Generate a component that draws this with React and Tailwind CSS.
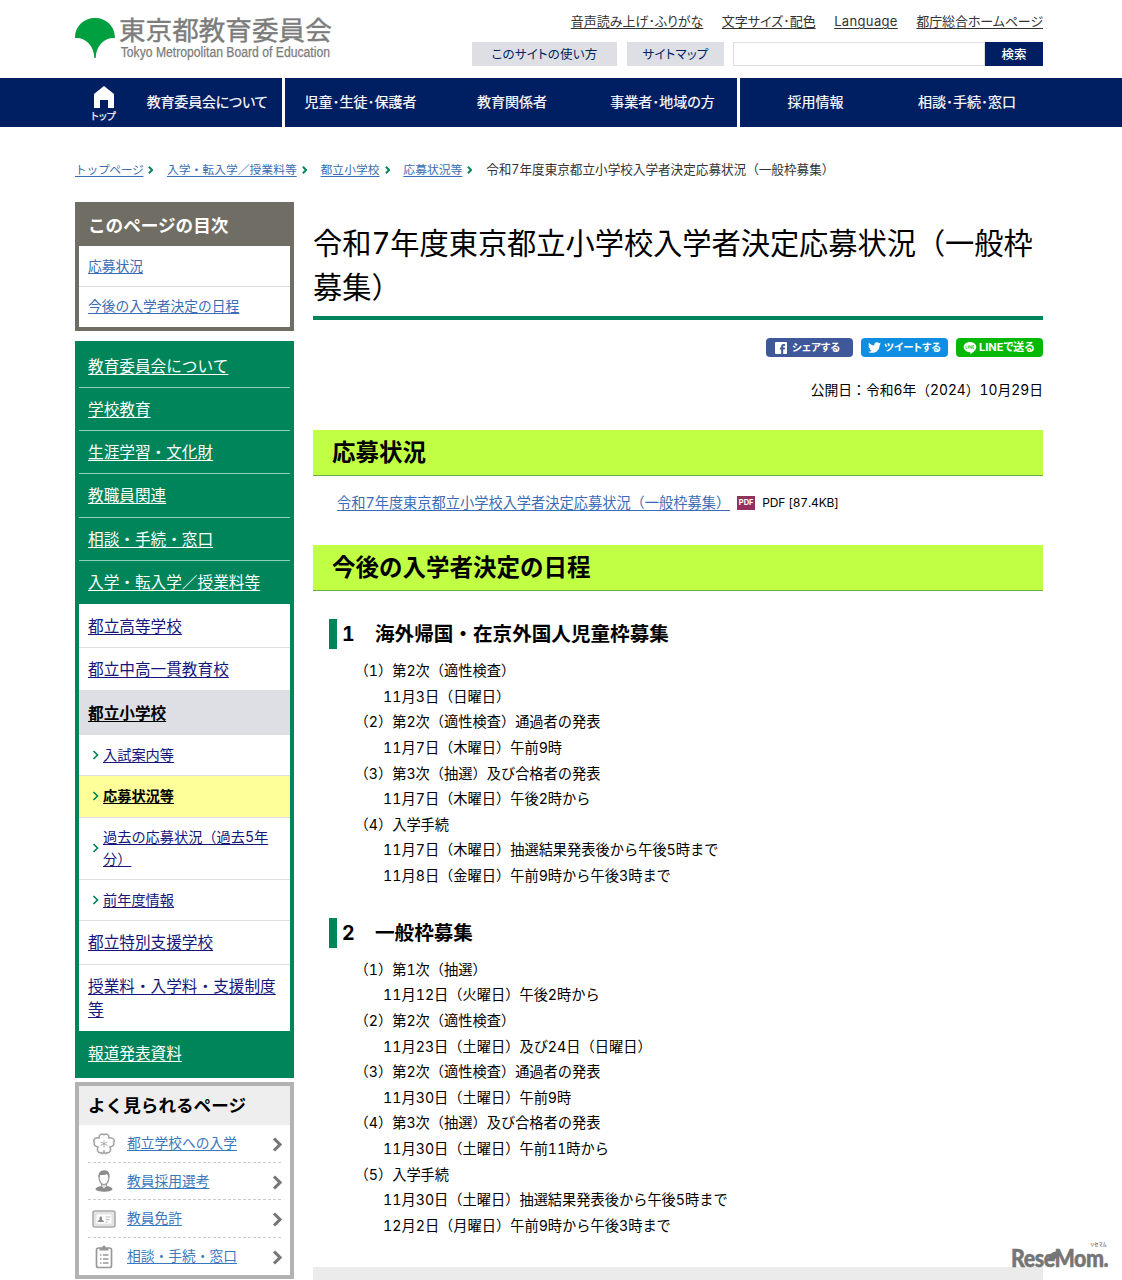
import React from "react";

const sideTop = ["教育委員会について", "学校教育", "生涯学習・文化財", "教職員関連", "相談・手続・窓口", "入学・転入学／授業料等"];

const schedules = [
  {
    no: "1",
    title: "海外帰国・在京外国人児童枠募集",
    gap: "mt-[28px]",
    items: [
      { head: "（1）第2次（適性検査）", dates: ["11月3日（日曜日）"] },
      { head: "（2）第2次（適性検査）通過者の発表", dates: ["11月7日（木曜日）午前9時"] },
      { head: "（3）第3次（抽選）及び合格者の発表", dates: ["11月7日（木曜日）午後2時から"] },
      { head: "（4）入学手続", dates: ["11月7日（木曜日）抽選結果発表後から午後5時まで", "11月8日（金曜日）午前9時から午後3時まで"] },
    ],
  },
  {
    no: "2",
    title: "一般枠募集",
    gap: "mt-[29px]",
    items: [
      { head: "（1）第1次（抽選）", dates: ["11月12日（火曜日）午後2時から"] },
      { head: "（2）第2次（適性検査）", dates: ["11月23日（土曜日）及び24日（日曜日）"] },
      { head: "（3）第2次（適性検査）通過者の発表", dates: ["11月30日（土曜日）午前9時"] },
      { head: "（4）第3次（抽選）及び合格者の発表", dates: ["11月30日（土曜日）午前11時から"] },
      { head: "（5）入学手続", dates: ["11月30日（土曜日）抽選結果発表後から午後5時まで", "12月2日（月曜日）午前9時から午後3時まで"] },
    ],
  },
];

function Chevron({ className, width = 2 }) {
  return (
    <svg viewBox="0 0 6 10" fill="none" stroke="currentColor" strokeWidth={width} className={className}>
      <path d="M1 1l4 4-4 4" />
    </svg>
  );
}

function Link({ className = "", children }) {
  return <a href="#" className={`underline underline-offset-[2px] decoration-1 ${className}`}>{children}</a>;
}

function Logo() {
  return (
    <div className="flex pt-[18px]">
      <svg viewBox="0 0 40 40" className="h-10 w-10" fill="#00a040">
        <path d="M0 20C0 8 9 0 20 0s20 8 20 20c-9-1-19 6-19.3 20h-1.4C19 26 9 19 0 20z" />
      </svg>
      <div className="ml-[4px] text-[#7c7c7c]">
        <div className="h-[27px] whitespace-nowrap text-[26.6px] leading-[24px] [-webkit-text-stroke:0.4px_#7c7c7c]">東京都教育委員会</div>
        <div className="origin-left scale-x-[0.87] whitespace-nowrap pl-[2px] font-['Liberation_Sans'] text-[14px] leading-[14px] [-webkit-text-stroke:0.25px_#7c7c7c]">
          Tokyo Metropolitan Board of Education
        </div>
      </div>
    </div>
  );
}

function Header() {
  return (
    <header className="ml-[75px] flex h-[78px] w-[968px] justify-between">
      <Logo />
      <div className="flex flex-col items-end">
        <div className="flex h-[42px] items-start gap-[18.5px] whitespace-nowrap pt-[11px] text-[13px] leading-[20px] text-[#333] [font-feature-settings:'palt']">
          <Link>音声読み上げ･ふりがな</Link>
          <Link>文字サイズ･配色</Link>
          <Link className="tracking-[0.35px]">Language</Link>
          <Link className="tracking-[-0.1px]">都庁総合ホームページ</Link>
        </div>
        <div className="flex h-6 text-[12.5px] leading-[25px] text-[#001e62] [font-feature-settings:'palt']">
          <a className="w-[145px] bg-[#dddfe5] text-center tracking-[0.2px]">このサイトの使い方</a>
          <a className="ml-[10px] w-[97px] bg-[#dddfe5] text-center tracking-[0.2px]">サイトマップ</a>
          <div className="ml-[9px] w-[252px] border border-[#ddd] bg-white" />
          <button className="w-[58px] bg-[#001e62] font-medium text-white">検索</button>
        </div>
      </div>
    </header>
  );
}

function Nav() {
  return (
    <nav className="h-[49px] bg-[#001e62]">
      <div className="ml-[75px] flex h-full w-[968px] text-center text-[14px] leading-[48px] text-white [font-feature-settings:'palt'] [-webkit-text-stroke:0.2px_white]">
        <a className="flex w-[57px] flex-col items-center pt-[8px]">
          <svg viewBox="0 0 20 22" className="h-[22px] w-5" fill="currentColor">
            <path d="M10 0l10 8v14h-6v-8H6v8H0V8z" />
          </svg>
          <span className="mt-[2px] text-[10px] leading-[13px]">トップ</span>
        </a>
        <a className="w-[150px] tracking-[-0.2px]">教育委員会について</a>
        <div className="flex w-[458px] border-x-[3px] border-white">
          <a className="w-[151px]">児童･生徒･保護者</a>
          <a className="w-[152px]">教育関係者</a>
          <a className="flex-1">事業者･地域の方</a>
        </div>
        <a className="w-[151px]">採用情報</a>
        <a className="w-[152px]">相談･手続･窓口</a>
      </div>
    </nav>
  );
}

function Crumbs() {
  const links = ["入学・転入学／授業料等", "都立小学校", "応募状況等"];
  return (
    <div className="ml-[75px] flex w-[968px] items-center whitespace-nowrap pt-[33px] text-[11.8px] leading-[20px]">
      <Link className="text-[#3a6db5] tracking-[-0.35px]">トップページ</Link>
      <Chevron className="ml-[5px] mr-[13.5px] h-[8px] w-[5px] text-[#00855a]" width={2.4} />
      {links.map((t) => (
        <React.Fragment key={t}>
          <Link className="text-[#3a6db5]">{t}</Link>
          <Chevron className="ml-[5px] mr-[13.8px] h-[8px] w-[5px] text-[#00855a]" width={2.4} />
        </React.Fragment>
      ))}
      <span className="text-[12.6px] text-[#333]">令和7年度東京都立小学校入学者決定応募状況（一般枠募集）</span>
    </div>
  );
}

function Toc() {
  return (
    <section className="border-4 border-t-0 border-[#706e64] text-[13.75px]">
      <h2 className="h-[44px] bg-[#706e64] pl-[9px] text-[17.6px] font-bold leading-[48px] text-white">このページの目次</h2>
      <div className="h-[41px] border-b border-[#ddd] pl-[9px] leading-[40px]"><Link className="text-[#3a6db5]">応募状況</Link></div>
      <div className="h-[39.5px] pl-[9px] leading-[39px]"><Link className="text-[#3a6db5]">今後の入学者決定の日程</Link></div>
    </section>
  );
}

function SubItem({ className, children }) {
  return (
    <li className={`flex items-center border-b border-[#ddd] pl-[13px] text-[14.2px] leading-[21.5px] ${className}`}>
      <Chevron className="h-[10px] w-[7px] shrink-0 text-[#00855a]" width={1.7} />
      <span className="-mt-px ml-[4px] w-[172px]">{children}</span>
    </li>
  );
}

function SideMenu() {
  return (
    <ul className="mt-[10px] border-x-4 border-[#00855a] bg-[#00855a] pt-[4px] text-[15.65px] text-white">
      {sideTop.map((t, i) => (
        <li key={t} className={`h-[43.3px] pl-[9px] leading-[44px] ${i < sideTop.length - 1 ? "border-b border-[#8fd0b8]" : ""}`}>
          <Link>{t}</Link>
        </li>
      ))}
      <li className="bg-white text-[#15157a]">
        <ul>
          <li className="h-[43.5px] border-b border-[#ddd] pl-[9px] leading-[45px]"><Link>都立高等学校</Link></li>
          <li className="h-[43px] border-b border-[#ddd] pl-[9px] leading-[43px]"><Link>都立中高一貫教育校</Link></li>
          <li className="h-[44.5px] bg-[#dddfe5] pl-[9px] font-bold leading-[45px] text-black"><Link>都立小学校</Link></li>
          <SubItem className="h-[40.5px]"><Link>入試案内等</Link></SubItem>
          <SubItem className="h-[42px] bg-[#ffff99] font-bold text-black"><Link>応募状況等</Link></SubItem>
          <SubItem className="h-[62px]"><Link>過去の応募状況（過去5年分）</Link></SubItem>
          <SubItem className="h-[41.5px]"><Link>前年度情報</Link></SubItem>
          <li className="h-[43.5px] border-b border-[#ddd] pl-[9px] leading-[44px]"><Link>都立特別支援学校</Link></li>
          <li className="h-[66.5px] pl-[9px] pt-[10px] leading-[23.5px]"><Link>授業料・入学料・支援制度等</Link></li>
        </ul>
      </li>
      <li className="h-[46.5px] pl-[9px] leading-[45px]"><Link>報道発表資料</Link></li>
    </ul>
  );
}

const popular = [
  {
    label: "都立学校への入学",
    icon: (
      <svg viewBox="0 0 24 24" className="w-6" fill="none" stroke="#a5a5a5" strokeWidth="1.5" strokeLinejoin="round">
        <path d="M7.300 6C6.800 3.500 8 2 10.500 1.900L12 2.800l1.500-.9C16 2 17.200 3.500 16.700 6c3-.6 5.300.5 5.800 3l-1 1.300.5 1.700c-.8 2-2.300 3-4.200 2.800 1.300 2.500 1 4.700-1.300 6l-1.700-.3-1 1.300c-1.300-.3-1.800-1.500-1.800-3 0 1.500-.5 2.700-1.800 3l-1-1.300-1.700.3c-2.300-1.300-2.600-3.500-1.300-6C4.300 15 2.800 14 2 12l.5-1.700-1-1.300c.5-2.500 2.800-3.600 5.800-3z" />
        <path d="M12 8.500v7M8.700 10l6.600 3.500M15.300 10l-6.600 3.500" strokeWidth=".9" />
      </svg>
    ),
  },
  {
    label: "教員採用選考",
    icon: (
      <svg viewBox="0 0 24 24" className="w-6">
        <path d="M9.500 14v3.500L12 20l2.500-2.500V14" fill="#ddd" stroke="#999" />
        <path d="M7.200 9c0-4 1.500-6 4.800-6s4.800 2 4.800 6c0 3.500-2 6.500-4.800 6.500S7.200 12.500 7.200 9z" fill="#fff" stroke="#999" strokeWidth="1.200" />
        <path d="M6.500 9C5.800 4 8.500 1 12.500 1.200c4 0 5.700 3.300 5 7.800-.7-2-1.500-3.300-2.500-4-2 1.300-5 .8-7 1-.8 1-.9 2-1.500 3z" fill="#8c8c8c" />
        <path d="M3.500 20.500c0-2 2.500-2.800 5.500-3.500l3 3 3-3c3 .7 5.500 1.500 5.500 3.500-2 3-15 3-17 0z" fill="#8c8c8c" />
      </svg>
    ),
  },
  {
    label: "教員免許",
    icon: (
      <svg viewBox="0 0 24 24" className="w-6" fill="none" stroke="#aaa">
        <rect x="1" y="4" width="22" height="16" rx="2" fill="#e6e6e6" strokeWidth="1.600" />
        <path d="M4 7h16v10H4z" fill="#fff" stroke="#ddd" strokeWidth=".8" />
        <path d="M5.500 15c0-1.500 1-1.500 2-2v-2c0-2 2.500-2 2.500 0v2c1 .500 2 .500 2 2z" fill="#888" stroke="none" />
        <path d="M13.500 10h5M13.500 12.500h4M13.500 15h2.500" stroke="#bbb" />
      </svg>
    ),
  },
  {
    label: "相談・手続・窓口",
    icon: (
      <svg viewBox="0 0 24 24" className="w-6" fill="none" stroke="#999" strokeWidth="1.700">
        <rect x="4.500" y="3" width="15" height="19.500" rx="2" />
        <path d="M7.500 5.500V2.800h2.700c.3-3 3.300-3 3.600 0h2.700v2.700z" fill="#999" stroke="none" />
        <path d="M8 10h1.500M11 10h5.500M8 14h1.500M11 14h5.500M8 18h1.500M11 18h5.500" strokeWidth="1.300" />
      </svg>
    ),
  },
];

function Popular() {
  return (
    <section className="mt-[4px] h-[197px] border-4 border-[#b2b2b2]">
      <h2 className="h-[39px] bg-[#eee] pl-[9px] text-[17.6px] font-bold leading-[39px]">よく見られるページ</h2>
      <ul className="px-[9px] pt-[0.7px] text-[13.75px]">
        {popular.map((p, i) => (
          <li key={p.label} className={`flex h-[37.5px] items-center ${i < 3 ? "border-b border-dashed border-[#ccc]" : ""}`}>
            <span className="ml-[4px] w-[35px]">{p.icon}</span>
            <Link className="flex-1 text-[#3a78bd]">{p.label}</Link>
            <Chevron className="-mr-[1px] mt-[2px] h-[15px] w-[10px] text-[#777]" width={2.1} />
          </li>
        ))}
      </ul>
    </section>
  );
}

function Share() {
  return (
    <div className="mt-[18px] flex justify-end gap-[8px] whitespace-nowrap text-[11px] font-bold leading-[19px] text-white [font-feature-settings:'palt']">
      <a className="flex h-[19px] w-[87px] items-center rounded-[4px] bg-[#3f5899] pl-[9px]">
        <svg viewBox="0 0 12 12" className="mr-[5px] h-[12px] w-[12px]">
          <rect width="12" height="12" rx="1" fill="#fff" />
          <path d="M8.200 12V7.500h1.500l.3-1.900H8.200V4.700c0-.6.2-.9 1-.9h.9V2.100H8.600c-1.700 0-2.400.9-2.400 2.300v1.200H4.900v1.900h1.300V12z" fill="#3f5899" />
        </svg>
        <span className="text-[10.5px]">シェアする</span>
      </a>
      <a className="flex h-[19px] w-[87px] items-center rounded-[4px] bg-[#0d8ee0] pl-[7px]">
        <svg viewBox="0 0 24 24" className="mr-[3px] h-[13px] w-[13px]" fill="#fff">
          <path d="M24 4.600c-.9.400-1.800.700-2.800.800 1-.6 1.800-1.600 2.200-2.700-1 .6-2 1-3.100 1.200C19.300 2.900 18 2.200 16.500 2.200c-3.200 0-5.600 3-4.800 6C7.700 8.100 4.100 6.100 1.700 3.100.4 5.300 1 8.200 3.200 9.700c-.8 0-1.600-.2-2.200-.6 0 2.300 1.600 4.400 3.900 4.900-.7.200-1.500.2-2.200.1.600 2 2.400 3.400 4.600 3.400C5.200 19.200 2.600 20 0 19.700c2.200 1.400 4.800 2.200 7.500 2.200 9.100 0 14.300-7.700 14-14.600 1-.7 1.800-1.600 2.500-2.700z" />
        </svg>
        <span className="text-[10.4px]">ツイートする</span>
      </a>
      <a className="flex h-[19px] w-[87px] items-center rounded-[4px] bg-[#06b806] pl-[7px]">
        <svg viewBox="0 0 14 14" className="mr-[2px] h-[14px] w-[14px]">
          <path d="M7 1c3.600 0 6.300 2.200 6.300 5 0 3-3.300 5.500-6 7.300.2-1 .2-1.900-.3-2C3.300 11 .7 8.900.7 6 .7 3.200 3.400 1 7 1z" fill="#fff" />
          <path d="M3 4.500v3h1.300M5.500 4.500v3M6.700 7.500v-3l1.700 3v-3M11 4.500H9.700v3H11M9.700 6H11" fill="none" stroke="#06b806" strokeWidth=".6" />
        </svg>
        <span>LINEで送る</span>
      </a>
    </div>
  );
}

function SectionTitle({ className, children }) {
  return (
    <h2 className={`h-[46px] border-b border-[#6cae4a] bg-[#c1ff45] pl-[19px] text-[23.5px] font-bold leading-[45px] ${className}`}>
      {children}
    </h2>
  );
}

function Main() {
  return (
    <main className="w-[730px]">
      <h1 className="border-b-4 border-[#00855a] pb-[7px] pt-[20px] text-[29.25px] leading-[43.5px] tracking-[-0.05px]">
        令和7年度東京都立小学校入学者決定応募状況（一般枠募集）
      </h1>
      <Share />
      <p className="mt-[22px] text-right text-[13.8px] leading-[22px]">公開日：令和6年（2024）10月29日</p>

      <SectionTitle className="mt-[29px]">応募状況</SectionTitle>
      <div className="mt-[16px] flex h-[22px] items-center pl-[24px] leading-[22px]">
        <Link className="whitespace-nowrap text-[14.22px] text-[#3a6db5]">令和7年度東京都立小学校入学者決定応募状況（一般枠募集）</Link>
        <span className="ml-[7px] h-[14px] w-[18px] bg-[#93305f] text-center text-[7.5px] font-bold leading-[14px] text-white">PDF</span>
        <span className="ml-[7px] text-[12px] tracking-[-0.15px]">PDF [87.4KB]</span>
      </div>

      <SectionTitle className="mt-[31px]">今後の入学者決定の日程</SectionTitle>

      {schedules.map((s) => (
        <section key={s.no} className={s.gap}>
          <h3 className="ml-[16px] flex h-[30px] border-l-8 border-[#00855a] pl-[5px] text-[19.6px] font-bold leading-[30px]">
            <span className="w-[33px]">{s.no}</span>
            {s.title}
          </h3>
          <div className="mt-[9px] pl-[41.5px] text-[14.22px] leading-[25.63px]">
            {s.items.map((it) => (
              <div key={it.head}>
                <p>{it.head}</p>
                {it.dates.map((d) => <p key={d} className="pl-[28.5px]">{d}</p>)}
              </div>
            ))}
          </div>
        </section>
      ))}

      <div className="mt-[28.5px] h-5 bg-[#ebebeb]" />
    </main>
  );
}

function Watermark() {
  return (
    <div className="absolute left-[1011px] top-[1243px] w-[100px] text-[#757575]">
      <div className="h-[4px] whitespace-nowrap pl-[79px] text-[4.2px] font-bold leading-[4px]">リセマム</div>
      <div className="mt-[2px] h-[18px] origin-left scale-x-[0.89] whitespace-nowrap font-['Lato'] text-[24px] font-black leading-[18px] tracking-[-0.5px] [-webkit-text-stroke:0.5px_#757575]">ReseMom.</div>
      <svg viewBox="0 0 12 9" className="absolute left-[37px] top-[8px] h-[9px] w-[12px]" fill="currentColor">
        <path d="M0 9C0 3 5 0 12 0c0 6-4 9-12 9z" />
      </svg>
    </div>
  );
}

export default function App() {
  return (
    <div className="relative h-[1280px] w-[1122px] overflow-hidden bg-white font-['Inter','Noto_Sans_CJK_JP',sans-serif] tabular-nums text-black" lang="ja">
      <Header />
      <Nav />
      <Crumbs />
      <div className="ml-[75px] mt-[22px] flex w-[968px] justify-between">
        <aside className="w-[219px]">
          <Toc />
          <SideMenu />
          <Popular />
        </aside>
        <Main />
      </div>
      <Watermark />
    </div>
  );
}
